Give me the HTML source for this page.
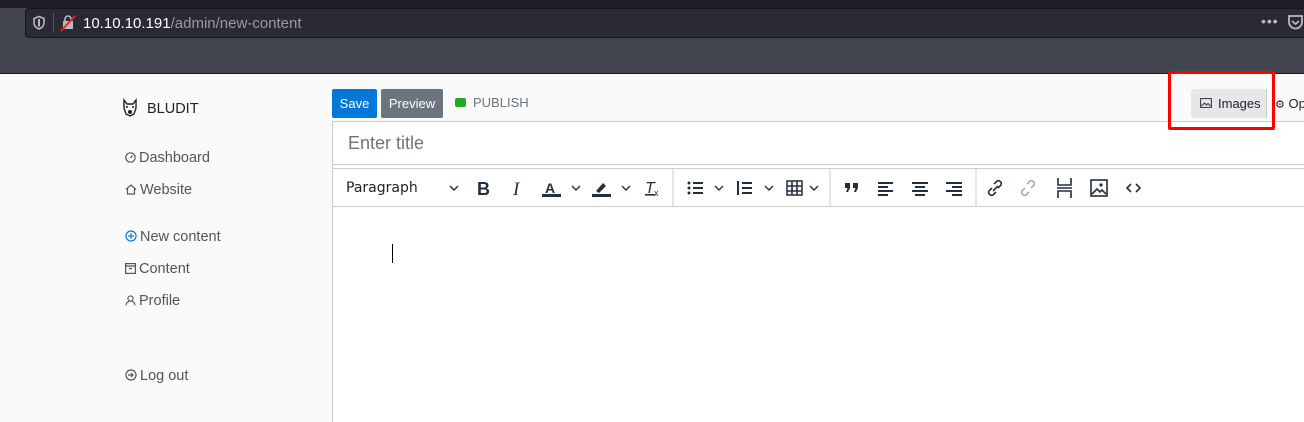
<!DOCTYPE html>
<html><head><meta charset="utf-8"><style>
*{box-sizing:border-box;margin:0;padding:0}
body{width:1304px;height:422px;overflow:hidden;background:#fafafa;font-family:"Liberation Sans",sans-serif;position:relative}
.a{position:absolute;white-space:nowrap}
.nav{font-size:14.5px;color:#555;}
.nav svg{vertical-align:-1px;margin-right:3px}
.tb{font-family:"DejaVu Sans",sans-serif}
</style></head><body>
<div class="a" style="left:0;top:0;width:1304px;height:74px;background:#42454d;border-bottom:1px solid #1a1a1e"></div>
<div class="a" style="left:0;top:0;width:1304px;height:8px;background:#1f1e25"></div>
<div class="a" style="left:25px;top:8px;width:1300px;height:30px;background:#2a2a36;border:1px solid #15151a;border-radius:4px"></div>
<svg class="a" style="left:32px;top:15px" width="14" height="16" viewBox="0 0 14 16"><path d="M7 1.5L2 3.5v4c0 3.5 2.5 5.5 5 6.5 2.5-1 5-3 5-6.5v-4z" fill="none" stroke="#bbb" stroke-width="1.6"/><path d="M7 4v7.5" stroke="#bbb" stroke-width="2"/></svg>
<div class="a" style="left:53px;top:13px;width:1px;height:20px;background:#555"></div>
<svg class="a" style="left:60px;top:14px" width="16" height="18" viewBox="0 0 16 18"><rect x="3" y="7" width="10" height="8" fill="#bbb"/><path d="M5 7V5a3 3 0 0 1 6 0v2" fill="none" stroke="#bbb" stroke-width="1.6"/><path d="M1 17L15 2" stroke="#e22" stroke-width="2"/></svg>
<div class="a" style="left:83px;top:15px;font-size:15px;color:#fff">10.10.10.191<span style="color:#9a9aa2">/admin/new-content</span></div>
<div class="a" style="left:1261px;top:13px;font-size:14px;color:#bbb;letter-spacing:1px">•••</div>
<svg class="a" style="left:1287px;top:14px" width="17" height="17" viewBox="0 0 17 17"><path d="M2 2h13v6a6.5 6.5 0 0 1-13 0z" fill="none" stroke="#bbb" stroke-width="1.8"/><path d="M5 7l3.5 3 3.5-3" fill="none" stroke="#bbb" stroke-width="1.8"/></svg>

<div class="a" style="left:332px;top:121px;width:980px;height:301px;background:#fff;border-left:1px solid #ccc"></div>
<div class="a" style="left:332px;top:121px;width:980px;height:44px;border:1px solid #ccc;border-right:none;background:#fff"></div>
<div class="a" style="left:348px;top:133px;font-size:18px;color:#6c757d">Enter title</div>
<div class="a" style="left:332px;top:168px;width:980px;height:39px;border:1px solid #ccc;border-right:none;background:#fff"></div>
<div class="a" style="left:392px;top:244px;width:1px;height:19px;background:#000"></div>

<svg class="a" style="left:122px;top:98px" width="16" height="20" viewBox="0 0 16 20"><path d="M2 2l3 4h6l3-4 0 8-2 6-4 2-4-2-2-6z" fill="none" stroke="#222" stroke-width="1.4"/><circle cx="8" cy="14" r="2" fill="#222"/><circle cx="5" cy="9" r="1" fill="#222"/><circle cx="11" cy="9" r="1" fill="#222"/></svg>
<div class="a" style="left:147px;top:101px;font-size:14.5px;color:#222">BLUDIT</div>

<div class="a nav" style="left:125px;top:150px"><svg width="11" height="11" viewBox="0 0 11 11"><circle cx="5.5" cy="5.5" r="4.7" fill="none" stroke="#555" stroke-width="1.2"/><path d="M5.5 6L7.5 3.5" stroke="#555" stroke-width="1.2"/></svg>Dashboard</div>
<div class="a nav" style="left:125px;top:182px"><svg width="12" height="11" viewBox="0 0 12 11"><path d="M1 5.5L6 1l5 4.5M2.5 4.5V10h7V4.5" fill="none" stroke="#555" stroke-width="1.2"/></svg>Website</div>
<div class="a nav" style="left:125px;top:229px"><svg width="12" height="12" viewBox="0 0 12 12"><circle cx="6" cy="6" r="5" fill="none" stroke="#0a7bd6" stroke-width="1.2"/><path d="M6 3v6M3 6h6" stroke="#0a7bd6" stroke-width="1.2"/></svg>New content</div>
<div class="a nav" style="left:125px;top:261px"><svg width="11" height="11" viewBox="0 0 11 11"><rect x="0.6" y="0.6" width="9.8" height="9.8" fill="none" stroke="#555" stroke-width="1.2"/><path d="M0.6 3h9.8M4 5.5h3" stroke="#555" stroke-width="1.2"/></svg>Content</div>
<div class="a nav" style="left:125px;top:293px"><svg width="11" height="11" viewBox="0 0 11 11"><circle cx="5.5" cy="3.5" r="2.6" fill="none" stroke="#555" stroke-width="1.1"/><path d="M1 10.5a4.5 4.5 0 0 1 9 0" fill="none" stroke="#555" stroke-width="1.1"/></svg>Profile</div>
<div class="a nav" style="left:125px;top:368px"><svg width="12" height="12" viewBox="0 0 12 12"><circle cx="6" cy="6" r="5" fill="none" stroke="#555" stroke-width="1.2"/><path d="M3 6h5M6 4l2 2-2 2" fill="none" stroke="#555" stroke-width="1.2"/></svg>Log out</div>

<div class="a" style="left:332px;top:89px;width:45px;height:29px;background:#0078d7;border-radius:2px;color:#fff;font-size:13px;text-align:center;line-height:29px">Save</div>
<div class="a" style="left:381px;top:89px;width:62px;height:29px;background:#6c757d;border-radius:2px;color:#fff;font-size:13px;text-align:center;line-height:29px">Preview</div>
<div class="a" style="left:455px;top:98px;width:11px;height:9px;background:#22aa22;border-radius:2px"></div>
<div class="a" style="left:473px;top:95px;font-size:13px;color:#6c757d">PUBLISH</div>

<div class="a" style="left:1191px;top:89px;width:76px;height:29px;background:#e5e7eb;border-radius:3px 0 0 3px;border-right:1px solid #ccc"></div>
<svg class="a" style="left:1200px;top:98px" width="12" height="10" viewBox="0 0 12 10"><rect x="0.6" y="0.6" width="10.8" height="8.8" fill="none" stroke="#333" stroke-width="1"/><path d="M1.5 8l3-3 2 2 1.5-1.5 2.5 2.5" fill="none" stroke="#333"/></svg>
<div class="a" style="left:1218px;top:96px;font-size:13px;color:#222">Images</div>
<div class="a" style="left:1275px;top:96px;font-size:13px;color:#222"><span style="font-size:11px">⚙</span> Op</div>
<div class="a" style="left:1168px;top:71px;width:107px;height:59px;border:3px solid #f00;border-radius:2px"></div>

<div class="a tb" style="left:346px;top:180px;font-size:14px;color:#222">Paragraph</div>
<svg class="a" style="left:0;top:168px" width="1304" height="40" viewBox="0 168 1304 40">
<g fill="none" stroke="#222f3e" stroke-width="1.4">
<path d="M450 186l4 4 4-4M572 186l4 4 4-4M622 186l4 4 4-4M715 186l4 4 4-4M765 186l4 4 4-4M810 186l4 4 4-4"/>
</g>
<text x="477" y="195" font-family="Liberation Sans" font-weight="bold" font-size="18" fill="#222f3e">B</text>
<text x="513" y="195" font-family="Liberation Serif" font-style="italic" font-size="19" fill="#222f3e">I</text>
<text x="545" y="193" font-family="Liberation Sans" font-size="14" fill="#222f3e" font-weight="bold">A</text>
<rect x="542" y="194" width="19" height="3" fill="#222f3e"/>
<path d="M596 191l7-8 3 3-7 7z" fill="#222f3e"/><rect x="592" y="194" width="19" height="3" fill="#222f3e"/>
<text x="645" y="193" font-family="Liberation Sans" font-style="italic" font-size="16" fill="#222f3e" text-decoration="underline">T</text>
<text x="654" y="196" font-family="Liberation Sans" font-size="9" fill="#222f3e">x</text>
<line x1="673" y1="169" x2="673" y2="206" stroke="#ccc"/>
<line x1="830" y1="169" x2="830" y2="206" stroke="#ccc"/>
<line x1="976" y1="169" x2="976" y2="206" stroke="#ccc"/>
<g fill="#222f3e"><circle cx="689" cy="183" r="1.5"/><circle cx="689" cy="188" r="1.5"/><circle cx="689" cy="193" r="1.5"/><rect x="693" y="182" width="10" height="2"/><rect x="693" y="187" width="10" height="2"/><rect x="693" y="192" width="10" height="2"/>
<rect x="742" y="182" width="10" height="2"/><rect x="742" y="187" width="10" height="2"/><rect x="742" y="192" width="10" height="2"/><rect x="737" y="181" width="2" height="14"/>
<rect x="787" y="181" width="15" height="14" fill="none" stroke="#222f3e" stroke-width="1.5"/>
<path d="M845 183h5v5l-2 4h-2l1.5-4H845zM853 183h5v5l-2 4h-2l1.5-4H853z"/>
<rect x="878" y="182" width="15" height="2"/><rect x="878" y="186" width="10" height="2"/><rect x="878" y="190" width="15" height="2"/><rect x="878" y="194" width="10" height="2"/>
<rect x="912" y="182" width="16" height="2"/><rect x="915" y="186" width="10" height="2"/><rect x="912" y="190" width="16" height="2"/><rect x="915" y="194" width="10" height="2"/>
<rect x="946" y="182" width="16" height="2"/><rect x="952" y="186" width="10" height="2"/><rect x="946" y="190" width="16" height="2"/><rect x="952" y="194" width="10" height="2"/>
</g>
<g fill="none" stroke="#222f3e" stroke-width="1.6">
<path d="M787 186h15M787 191h15M792 181v14M797 181v14"/>
<path d="M994 184l3-3a3 3 0 0 1 4 4l-3 3M996 192l-3 3a3 3 0 0 1-4-4l3-3M993 191l5-5"/>
<path d="M1027 184l3-3a3 3 0 0 1 4 4l-3 3M1029 192l-3 3a3 3 0 0 1-4-4l3-3" stroke="#aab"/>
<path d="M1058 178v7h13v-7M1058 198v-7h13v7M1057 188h15"/>
<rect x="1091" y="180" width="16" height="16"/>
<path d="M1092 194l5-5 3 3 2-2 4 4"/>
<path d="M1131 184l-4 4 4 4M1136 184l4 4-4 4"/>
</g>
<circle cx="1101" cy="185" r="1.6" fill="#222f3e"/>
</svg>
</body></html>
